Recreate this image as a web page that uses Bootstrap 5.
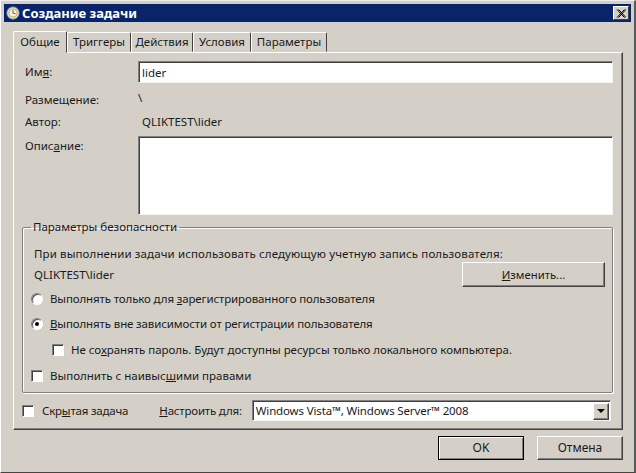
<!DOCTYPE html>
<html lang="ru">
<head>
<meta charset="utf-8">
<title>Создание задачи</title>
<link rel="stylesheet" href="https://cdn.jsdelivr.net/npm/bootstrap@5.3.0/dist/css/bootstrap.min.css">
<style>
html,body{height:100%;margin:0;overflow:hidden}
body{background:#d4d0c8;color:#1a1a1a;font:11.5px/14px "Noto Sans","Liberation Sans",sans-serif}
u{text-underline-offset:1px}
.win{width:636px;height:473px;padding:3px 3px 0;border-left:1px solid #fff;border-top:1px solid #eee;border-right:2px solid #5a5a5a;border-bottom:1px solid #444}
.titlebar{height:18px;background:#0a246a;color:#fff;font-weight:700;font-size:13px;padding:0 2px 0 2px}
.titleico{margin-right:2px}
.closebtn{width:16px;height:14px;background:#d4d0c8;border:1px solid;border-color:#fff #404040 #404040 #fff;padding:0;line-height:0}
.tabsrow{height:21px;margin:9px 0 0 9px;padding:0;border:0;flex-wrap:nowrap;align-items:flex-end}
.tabsrow .nav-link{height:20px;padding:2px 0 0;margin:0;font-size:11.5px;line-height:14px;text-align:center;color:#1a1a1a;background:#d4d0c8;border:1px solid;border-color:#fff #404040 #d4d0c8 #fff;border-radius:2px 2px 0 0}
.tabsrow .nav-link.active{height:22px;width:54px;padding:3px 0 0;color:#1a1a1a;background:#d4d0c8;border-color:#fff #404040 #d4d0c8 #fff;position:relative;z-index:1;margin-bottom:-1px}
.tabsrow .nav-item:nth-child(2) .nav-link{width:64px}
.tabsrow .nav-item:nth-child(3) .nav-link{width:62px}
.tabsrow .nav-item:nth-child(4) .nav-link{width:58px}
.tabsrow .nav-item:nth-child(5) .nav-link{width:76px}
.tabpanel{width:610px;height:378px;margin-left:9px;border:1px solid;border-color:#fff #404040 #404040 #fff;box-shadow:inset -1px -1px #808080;padding:8px 0 0 8px}
.lblcol{width:116px;flex:none;padding-left:3px}
.lbltop{padding-top:3px}
.winput{background:#fff;border:1px solid;border-color:#808080 #f4f4f0 #f4f4f0 #808080;box-shadow:inset 1px 1px #404040;width:475px;padding:2px 3px;color:#1a1a1a;border-radius:0;font:inherit;outline:0;display:block}
.inh{height:22px}
.tah{height:79px;resize:none}
.rowa{height:22px}
.firstrow{margin-top:6px}
.descrow{margin-top:3px}
.slash{margin-bottom:4px}
.secbox{width:591px;height:173px;margin:5px 0 0 0;padding:0 7px 0 8px;border:1px solid #808080;box-shadow:1px 1px #fff,inset 1px 1px #fff;border-radius:2px;min-width:0}
.secbox legend{float:none;width:auto;margin:0 0 0 0;padding:0 2px;font-size:11.5px;line-height:14px}
.plain{margin-left:3px}
.wide{margin-top:13px;letter-spacing:.12px}
.acct{margin-top:1px;margin-bottom:5px}
.rw{display:flex;align-items:center;gap:7px;letter-spacing:-.13px}
.gap11{margin-top:11px}
.gap12{margin-top:12px}
.nested{padding-left:21px;gap:7px;letter-spacing:-.03px}
.toprow{letter-spacing:0}
.ck{width:12px;height:12px;flex:none;background:#fff;border:1px solid;border-color:#808080 #fff #fff #808080;box-shadow:inset 1px 1px #404040}
.rd{width:12px;height:12px;flex:none;border-radius:50%;background:#fff;border:1px solid;border-color:#808080 #fff #fff #808080;box-shadow:inset 1px 1px #555;display:flex;align-items:center;justify-content:center}
.rd i{display:block;width:4px;height:4px;border-radius:50%;background:#000}
.wbtn{background:#d4d0c8;color:#1a1a1a;border:1px solid;border-color:#fff #404040 #404040 #fff;box-shadow:inset -1px -1px #808080;border-radius:0;padding:0;font-size:12px;line-height:14px;--bs-btn-hover-bg:#d4d0c8}
.chgbtn{width:143px;height:25px;font-size:11.3px}
.okbtn{width:86px;height:24px;border:1px solid #000;box-shadow:inset 1px 1px #fff,inset -1px -1px #808080}
.canbtn{width:86px;height:24px}
.bottomrow{margin-top:7px;letter-spacing:-.2px}
.hidlbl{margin-left:8px;margin-right:31px}
.cfglbl{margin-right:10px}
.wsel{width:359px;height:21px;background:#fff;border:1px solid;border-color:#808080 #f4f4f0 #f4f4f0 #808080;box-shadow:inset 1px 1px #404040;padding-left:3px;letter-spacing:-.15px}
.arr{width:16px;height:17px;margin:1px 1px 0 0;background:#d4d0c8;border:1px solid;border-color:#fff #404040 #404040 #fff;box-shadow:inset -1px -1px #808080}
.arr i{display:block;width:0;height:0;border:4px solid transparent;border-top-color:#000;border-bottom:0}
.footrow{width:610px;margin:6px 0 0 9px;gap:13px}
</style>
</head>
<body>
<div class="win d-flex flex-column">
  <div class="titlebar d-flex align-items-center">
    <svg width="14" height="14" viewBox="0 0 16 16" class="titleico"><circle cx="8" cy="8" r="7" fill="#e8e4d8" stroke="#8a9bb8"/><circle cx="8" cy="8" r="4.6" fill="#f6f2e2" stroke="#c89a3c"/><path d="M8 4.5V8l3 1" fill="none" stroke="#7a6a30" stroke-width="1.2"/></svg>
    <span class="flex-grow-1">Создание задачи</span>
    <button type="button" class="closebtn d-flex align-items-center justify-content-center"><svg width="10" height="9" viewBox="0 0 10 9"><path d="M1 0.5L8.5 8.5M2.5 0.5L10 8.5M8.5 0.5L1 8.5M10 0.5L2.5 8.5" stroke="#000" stroke-width="1" fill="none"/></svg></button>
  </div>
  <ul class="nav nav-tabs tabsrow">
    <li class="nav-item"><a class="nav-link active" href="#">Общие</a></li>
    <li class="nav-item"><a class="nav-link" href="#">Триггеры</a></li>
    <li class="nav-item"><a class="nav-link" href="#">Действия</a></li>
    <li class="nav-item"><a class="nav-link" href="#">Условия</a></li>
    <li class="nav-item"><a class="nav-link" href="#">Параметры</a></li>
  </ul>
  <div class="tabpanel">
    <div class="d-flex align-items-center inh">
      <div class="lblcol">Им<u>я</u>:</div>
      <input class="winput inh" value="lider">
    </div>
    <div class="d-flex align-items-center rowa firstrow">
      <div class="lblcol">Размещение:</div><div class="slash">\</div>
    </div>
    <div class="d-flex align-items-center rowa">
      <div class="lblcol">Автор:</div><div class="ps-1">QLIKTEST\lider</div>
    </div>
    <div class="d-flex descrow">
      <div class="lblcol lbltop">Опис<u>а</u>ние:</div>
      <textarea class="winput tah"></textarea>
    </div>
    <fieldset class="secbox">
      <legend>Параметры безопасности</legend>
      <div class="plain wide">При выполнении задачи использовать следующую учетную запись пользователя:</div>
      <div class="d-flex align-items-center justify-content-between acct">
        <span class="plain">QLIKTEST\lider</span>
        <button type="button" class="btn wbtn chgbtn"><u>И</u>зменить...</button>
      </div>
      <div class="rw"><span class="rd"></span><span>Выполнять только для <u>з</u>арегистрированного пользователя</span></div>
      <div class="rw gap11"><span class="rd"><i></i></span><span><u>В</u>ыполнять вне зависимости от регистрации пользователя</span></div>
      <div class="rw gap12 nested"><span class="ck"></span><span>Не со<u>х</u>ранять пароль. Будут доступны ресурсы только локального компьютера.</span></div>
      <div class="rw gap12 toprow"><span class="ck"></span><span>Выполнить с наивыс<u>ш</u>ими правами</span></div>
    </fieldset>
    <div class="d-flex align-items-center bottomrow">
      <span class="ck"></span><span class="hidlbl">Скр<u>ы</u>тая задача</span>
      <span class="cfglbl"><u>Н</u>астроить для:</span>
      <div class="wsel d-flex align-items-center justify-content-between">
        <span>Windows Vista™, Windows Server™ 2008</span>
        <span class="arr d-flex align-items-center justify-content-center"><i></i></span>
      </div>
    </div>
  </div>
  <div class="d-flex justify-content-end footrow">
    <button type="button" class="btn wbtn okbtn">OK</button>
    <button type="button" class="btn wbtn canbtn">Отмена</button>
  </div>
</div>
<script src="https://cdn.jsdelivr.net/npm/bootstrap@5.3.0/dist/js/bootstrap.bundle.min.js"></script>
</body>
</html>
